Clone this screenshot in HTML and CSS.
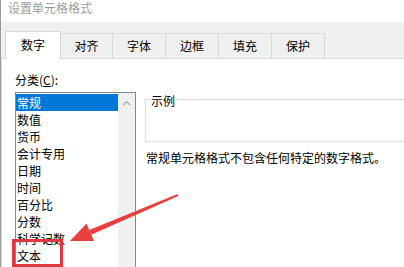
FILE: index.html
```html
<!DOCTYPE html>
<html lang="zh-CN">
<head>
<meta charset="utf-8">
<link rel="stylesheet" href="styles.css">
</head>
<body>
<div class="window">
  <div class="titlebar">设置单元格格式</div>
  <div class="client">
    <div class="tabs">
      <div class="tab active">数字</div>
      <div class="tab">对齐</div>
      <div class="tab">字体</div>
      <div class="tab">边框</div>
      <div class="tab">填充</div>
      <div class="tab">保护</div>
    </div>
    <div class="panel">
      <div class="left">
        <div class="label">分类(<u>C</u>):</div>
        <div class="listbox">
          <div class="items">
            <div class="item selected">常规</div>
            <div class="item">数值</div>
            <div class="item">货币</div>
            <div class="item">会计专用</div>
            <div class="item">日期</div>
            <div class="item">时间</div>
            <div class="item">百分比</div>
            <div class="item">分数</div>
            <div class="item">科学记数</div>
            <div class="item">文本</div>
          </div>
          <div class="scrollbar">
            <svg class="up" width="9" height="6" viewBox="0 0 9 6"><path d="M1 5 L4.5 1.5 L8 5" fill="none" stroke="#a6a6a6" stroke-width="1.2"/></svg>
          </div>
        </div>
      </div>
      <div class="right">
        <fieldset class="sample">
          <legend>示例</legend>
        </fieldset>
        <div class="desc">常规单元格格式不包含任何特定的数字格式。</div>
      </div>
    </div>
  </div>
</div>
<svg class="annot" width="404" height="267" viewBox="0 0 404 267">
  <rect x="13.5" y="240.5" width="48" height="25" fill="none" stroke="#e0383e" stroke-width="3"/>
  <polygon points="178.4,195.9 91.2,234.7 89.2,230.1 177.6,194.1" fill="#e8403f"/>
  <polygon points="70,241 86.5,223.5 94,241" fill="#e8403f"/>
</svg>
</body>
</html>
```
FILE: styles.css
```css
html, body {
  margin: 0;
  padding: 0;
  background: #ffffff;
  overflow: hidden;
}
body {
  width: 404px;
  height: 267px;
  position: relative;
  font-family: "Noto Sans CJK SC", "Noto Sans", sans-serif;
  font-size: 12px;
  color: #000;
}
.window {
  border-left: 1px solid #9a9a9a;
  height: 267px;
  width: 403px;
  overflow: hidden;
}
.titlebar {
  height: 22px;
  box-sizing: border-box;
  padding-left: 7px;
  padding-top: 1px;
  line-height: 14px;
  color: #9c9c9c;
  background: #ffffff;
}
.client {
  background: #f0f0f0;
  padding-top: 9px;
  height: 245px;
  box-sizing: border-box;
}
.tabs {
  display: flex;
  align-items: flex-end;
  height: 27px;
  padding-left: 4px;
}
.tab {
  box-sizing: border-box;
  height: 25px;
  width: 53px;
  border: 1px solid #d9d9d9;
  border-bottom: none;
  border-left: none;
  text-align: center;
  line-height: 24px;
  background: #f0f0f0;
}
.tab.active {
  height: 28px;
  width: 56px;
  border-left: 1px solid #d9d9d9;
  background: #ffffff;
  line-height: 25px;
  margin-bottom: -1px;
  position: relative;
  z-index: 1;
}
.tab:nth-child(2) { width: 52px; }
.panel {
  background: #ffffff;
  border-top: 1px solid #d9d9d9;
  border-left: 1px solid #d9d9d9;
  height: 209px;
  display: flex;
  padding-top: 14px;
  box-sizing: border-box;
  overflow: hidden;
}
.left {
  padding-left: 13px;
}
.label {
  line-height: 14px;
  height: 14px;
}
.listbox {
  margin-top: 5px;
  width: 121px;
  height: 175px;
  box-sizing: border-box;
  border: 1px solid #828790;
  border-bottom: none;
  display: flex;
}
.items {
  width: 102px;
  padding-top: 1px;
}
.item {
  height: 17px;
  line-height: 17px;
  padding-left: 1px;
}
.item.selected {
  background: #0078d7;
  color: #ffffff;
}
.scrollbar {
  width: 17px;
  background: #f0f0f0;
  display: flex;
  justify-content: center;
  padding-top: 7px;
  box-sizing: border-box;
}
.up {
  display: block;
}
.right {
  margin-left: 9px;
  padding-top: 18px;
  flex: 1;
  min-width: 0;
}
.sample {
  margin: 0 -8px 0 0;
  padding: 0;
  height: 51px;
  box-sizing: border-box;
  border: 1px solid #dcdcdc;
}
.sample legend {
  margin-left: 4px;
  padding: 3px 1px 0;
  line-height: 14px;
  font-size: 12px;
}
.desc {
  margin-top: 9px;
  line-height: 14px;
  margin-left: 1px;
  white-space: nowrap;
}
.annot {
  position: absolute;
  left: 0;
  top: 0;
  pointer-events: none;
}
```
